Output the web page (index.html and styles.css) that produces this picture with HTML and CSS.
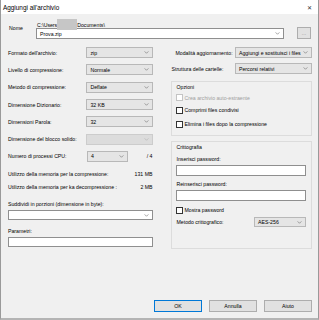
FILE: index.html
```html
<!DOCTYPE html>
<html lang="it">
<head>
    <meta charset="UTF-8">
    <meta name="viewport" content="width=device-width, initial-scale=1.0">
    <title>Aggiungi all'archivio</title>
    <link rel="stylesheet" href="styles.css">
</head>
<body>
    <div class="window">
        <div class="titlebar">
            <span class="title">Aggiungi all'archivio</span>
            <span class="close">&#x2715;</span>
        </div>

        <div class="name-row">
            <span class="name-label">Nome</span>
            <div class="name-stack">
                <div class="path">C:\Users<span class="blur"></span>Documents\</div>
                <div class="combo edit wide"><span>Prova.zip</span><svg class="arrow" viewBox="0 0 6 4"><polyline points="0.5,0.5 3,3 5.5,0.5"/></svg></div>
            </div>
            <div class="btn dots">...</div>
        </div>

        <div class="columns">
            <div class="left">
                <div class="row"><span>Formato dell'archivio:</span><div class="combo"><span>zip</span><svg class="arrow" viewBox="0 0 6 4"><polyline points="0.5,0.5 3,3 5.5,0.5"/></svg></div></div>
                <div class="row"><span>Livello di compressione:</span><div class="combo"><span>Normale</span><svg class="arrow" viewBox="0 0 6 4"><polyline points="0.5,0.5 3,3 5.5,0.5"/></svg></div></div>
                <div class="row"><span>Metodo di compressione:</span><div class="combo"><span>Deflate</span><svg class="arrow" viewBox="0 0 6 4"><polyline points="0.5,0.5 3,3 5.5,0.5"/></svg></div></div>
                <div class="row"><span>Dimensione Dizionario:</span><div class="combo"><span>32 KB</span><svg class="arrow" viewBox="0 0 6 4"><polyline points="0.5,0.5 3,3 5.5,0.5"/></svg></div></div>
                <div class="row"><span>Dimensioni Parola:</span><div class="combo"><span>32</span><svg class="arrow" viewBox="0 0 6 4"><polyline points="0.5,0.5 3,3 5.5,0.5"/></svg></div></div>
                <div class="row"><span>Dimensione del blocco solido:</span><div class="combo disabled"><span></span><svg class="arrow" viewBox="0 0 6 4"><polyline points="0.5,0.5 3,3 5.5,0.5"/></svg></div></div>
                <div class="row cpu">
                    <span>Numero di processi CPU:</span>
                    <div class="combo short"><span>4</span><svg class="arrow" viewBox="0 0 6 4"><polyline points="0.5,0.5 3,3 5.5,0.5"/></svg></div>
                    <span class="cpu-max">/ 4</span>
                </div>

                <div class="mem first"><span>Utilizzo della memoria per la compressione:</span><span>131 MB</span></div>
                <div class="mem"><span>Utilizzo della memoria per ka decompressione :</span><span>2 MB</span></div>

                <div class="field-label split">Suddividi in porzioni (dimensione in byte):</div>
                <div class="combo edit full"><span></span><svg class="arrow" viewBox="0 0 6 4"><polyline points="0.5,0.5 3,3 5.5,0.5"/></svg></div>

                <div class="field-label params">Parametri:</div>
                <div class="text-input full"></div>
            </div>

            <div class="right">
                <div class="rrow mode"><span>Modalità aggiornamento:</span><div class="combo mode-combo"><span>Aggiungi e sostituisci i files</span><svg class="arrow" viewBox="0 0 6 4"><polyline points="0.5,0.5 3,3 5.5,0.5"/></svg></div></div>
                <div class="rrow"><span>Struttura delle cartelle:</span><div class="combo mode-combo"><span>Percorsi relativi</span><svg class="arrow" viewBox="0 0 6 4"><polyline points="0.5,0.5 3,3 5.5,0.5"/></svg></div></div>

                <div class="group options">
                    <div class="group-title">Opzioni</div>
                    <label class="check disabled"><span class="box"></span>Crea archivio auto-estraente</label>
                    <label class="check"><span class="box"></span>Comprimi files condivisi</label>
                    <label class="check"><span class="box"></span>Elimina i files dopo la compressione</label>
                </div>

                <div class="group crypto">
                    <div class="group-title">Crittografia</div>
                    <div class="field-label">Inserisci password:</div>
                    <div class="text-input pw"></div>
                    <div class="field-label">Reinserisci password:</div>
                    <div class="text-input pw"></div>
                    <label class="check show"><span class="box"></span>Mostra password</label>
                    <div class="method">
                        <span>Metodo crittografico:</span>
                        <div class="combo aes"><span>AES-256</span><svg class="arrow" viewBox="0 0 6 4"><polyline points="0.5,0.5 3,3 5.5,0.5"/></svg></div>
                    </div>
                </div>
            </div>
        </div>

        <div class="footer">
            <div class="btn default">OK</div>
            <div class="btn">Annulla</div>
            <div class="btn">Aiuto</div>
        </div>
    </div>
</body>
</html>
```

FILE: styles.css
```css
body {
    margin: 0;
    font-family: "Liberation Sans", Arial, sans-serif;
    font-size: 5.2px;
    color: #000;
    background: #fff;
}
.window {
    width: 319px;
    height: 320px;
    box-sizing: border-box;
    display: flex;
    flex-direction: column;
    background: #f0f0f0;
    border-left: 1px solid #9a9a9a;
    border-right: 1px solid #9a9a9a;
    border-bottom: 2px solid #b4b4b4;
}
.titlebar {
    height: 14px;
    flex: none;
    display: flex;
    align-items: center;
    justify-content: space-between;
    background: #fff;
    padding: 0 6px 0 2px;
}
.title {
    font-size: 6.4px;
}
.close {
    font-size: 6px;
    color: #333;
}

/* name */
.name-row {
    display: flex;
    padding-left: 8px;
    height: 26px;
}
.name-label {
    width: 27px;
    padding-top: 11px;
}
.name-stack {
    width: 248px;
}
.path {
    height: 14px;
    line-height: 8px;
    padding-top: 5px;
    box-sizing: border-box;
    padding-left: 1px;
}
.blur {
    display: inline-block;
    width: 20px;
    height: 11px;
    background: #c6c6c6;
    vertical-align: -3px;
}
.dots {
    width: 14px;
    height: 12px;
    margin: 13px 0 0 13px;
    color: #8a8a8a;
}

/* combos */
.combo {
    display: flex;
    align-items: center;
    justify-content: space-between;
    box-sizing: border-box;
    height: 11px;
    padding: 0 3px 0 3px;
    background: #e5e5e5;
    border: 1px solid #b8b8b8;
}
.combo.edit {
    background: #fff;
    border-color: #8f8f8f;
}
.combo.wide {
    height: 11px;
}
.combo.disabled {
    background: #dcdcdc;
    border-color: #cccccc;
}
.combo.disabled .arrow polyline {
    stroke: #b0b0b0;
}
.arrow {
    width: 5px;
    height: 3px;
    flex: none;
}
.arrow polyline {
    fill: none;
    stroke: #6a6a6a;
    stroke-width: 0.8;
}

/* columns */
.columns {
    display: flex;
    gap: 18px;
    padding: 4px 6px 0 7px;
}
.left {
    width: 146px;
}
.right {
    width: 141px;
}
.row {
    height: 17.3px;
    display: flex;
    align-items: center;
    justify-content: space-between;
}
.row .combo {
    width: 67px;
}
.row.cpu {
    justify-content: flex-start;
}
.row.cpu span:first-child {
    width: 79px;
}
.row .combo.short {
    width: 41px;
}
.cpu-max {
    margin-left: auto;
    margin-right: 1px;
}
.mem {
    display: flex;
    justify-content: space-between;
    line-height: 13px;
    padding-right: 1px;
}
.mem.first {
    margin-top: 3px;
}
.field-label {
    line-height: 10px;
}
.split {
    margin-top: 5px;
}
.combo.full {
    height: 10px;
    margin-top: 1px;
}
.params {
    margin-top: 6px;
}
.text-input {
    box-sizing: border-box;
    background: #fff;
    border: 1px solid #8f8f8f;
}
.text-input.full {
    height: 10px;
    margin-top: 1px;
}

/* right side */
.rrow {
    display: flex;
    align-items: center;
    justify-content: space-between;
    height: 15px;
}
.rrow.mode {
    height: 17px;
    padding-left: 4px;
}
.mode-combo {
    width: 77px;
}
.group {
    border: 1px solid #dcdcdc;
    box-sizing: border-box;
    padding: 0 5px 0 4px;
}
.options {
    height: 55px;
    margin-top: 5px;
}
.group-title {
    line-height: 9px;
    margin-top: 1px;
}
.check {
    display: flex;
    align-items: center;
    height: 14px;
    gap: 1px;
}
.options .check.disabled {
    color: #a0a0a0;
    height: 11px;
}
.box {
    width: 5px;
    height: 5px;
    border: 1px solid #333;
    background: #fff;
}
.check.disabled .box {
    border-color: #c4c4c4;
}
.crypto {
    height: 108px;
    margin-top: 5px;
}
.crypto .group-title {
    margin-bottom: 3px;
}
.crypto .field-label {
    line-height: 9px;
}
.text-input.pw {
    height: 11px;
    margin: 1px 0 4px;
}
.check.show {
    height: 10px;
}
.method {
    display: flex;
    align-items: center;
    justify-content: space-between;
    height: 14px;
}
.combo.aes {
    width: 52px;
    height: 10px;
}

/* buttons */
.footer {
    margin-top: auto;
    display: flex;
    justify-content: flex-end;
    gap: 7px;
    padding: 0 6px 6px 0;
}
.btn {
    box-sizing: border-box;
    display: flex;
    align-items: center;
    justify-content: center;
    width: 48px;
    height: 12px;
    background: #e1e1e1;
    border: 1px solid #adadad;
}
.btn.default {
    border-color: #0078d7;
}
.btn.dots {
    width: 14px;
}
```
